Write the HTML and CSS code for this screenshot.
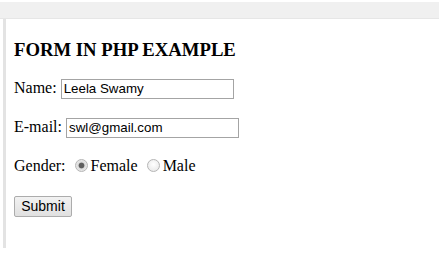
FILE: index.html
```html
<!DOCTYPE html>
<html>
<head>
<meta charset="utf-8">
<link rel="stylesheet" href="styles.css">
</head>
<body>
<div class="topbar"></div>
<div class="frame">
  <h2 class="title">FORM IN PHP EXAMPLE</h2>
  <form class="form">
    <p class="row">Name: <input class="field name-field" type="text" value="Leela Swamy"></p>
    <p class="row">E-mail: <input class="field" type="text" value="swl@gmail.com"></p>
    <p class="row">Gender: <input class="radio" type="radio" name="g" checked><span class="opt">Female</span> <input class="radio" type="radio" name="g"><span class="opt">Male</span></p>
    <p class="row"><button class="submit" type="button">Submit</button></p>
  </form>
</div>
</body>
</html>
```
FILE: styles.css
```css
html, body {
  margin: 0;
  padding: 0;
  background: #ffffff;
}
body {
  font-family: "Liberation Serif", "Times New Roman", serif;
  font-size: 16px;
  color: #000;
  width: 442px;
  height: 257px;
  overflow: hidden;
}
.topbar {
  margin-top: 2px;
  height: 16px;
  width: 439px;
  background: #f0f0f0;
  border-bottom: 1px solid #e6e6e6;
}
.frame {
  margin-left: 3px;
  border-left: 3px solid #e3e3e3;
  padding: 5px 0 0 8px;
  height: 224px;
}
.title {
  font-size: 18.72px;
  font-weight: bold;
  margin: 15px 0 16px 0;
  line-height: 22px;
}
.form { margin: 0; }
.row {
  margin: 0 0 17px 0;
  line-height: 22px;
  height: 22px;
}
.field {
  box-sizing: border-box;
  width: 173px;
  height: 20px;
  border: 1px solid #a4a4a4;
  padding: 1px 2px;
  font-family: "Liberation Sans", Arial, sans-serif;
  font-size: 13.33px;
  color: #000;
  vertical-align: baseline;
  margin: 0;
}
.radio {
  appearance: none;
  -webkit-appearance: none;
  width: 13px;
  height: 13px;
  margin: 0 3px 0 5px;
  border: 1px solid #b5b5b5;
  border-radius: 50%;
  background: radial-gradient(circle at 50% 40%, #ffffff 0%, #e4e4e4 100%);
  box-sizing: border-box;
  vertical-align: -1px;
}
.radio:checked {
  background: radial-gradient(circle, #5f5f5f 0 2.5px, #dcdcdc 3.3px, #f2f2f2 100%);
}
.submit {
  box-sizing: border-box;
  width: 58px;
  height: 21px;
  font-family: "Liberation Sans", Arial, sans-serif;
  font-size: 14px;
  color: #000;
  border: 1px solid #acacac;
  border-radius: 2px;
  background: linear-gradient(#f2f2f2, #e0e0e0);
  padding: 0;
  margin: 0;
  vertical-align: middle;
}
```
